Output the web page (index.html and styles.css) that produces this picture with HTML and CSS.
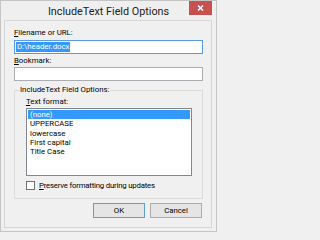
FILE: index.html
```html
<!DOCTYPE html>
<html>
<head>
<meta charset="utf-8">
<link rel="stylesheet" href="styles.css">
</head>
<body>
<div class="window">
  <div class="titlebar">
    <span class="title">IncludeText Field Options</span>
    <span class="close"><svg width="23" height="14" viewBox="0 0 23 14"><path d="M9 4.5 L14 9.5 M14 4.5 L9 9.5" stroke="#fff" stroke-width="1.6" fill="none"/></svg></span>
  </div>
  <div class="client">
    <div class="lbl"><u>F</u>ilename or URL:</div>
    <div class="input focused"><span class="seltext">D:\header.docx</span></div>
    <div class="lbl lbl2"><u>B</u>ookmark:</div>
    <div class="input"></div>
    <fieldset class="group">
      <legend class="legend">IncludeText Field Options:</legend>
      <div class="lbl lbl3"><u>T</u>ext format:</div>
      <div class="list">
        <div class="item selected">(none)</div>
        <div class="item">UPPERCASE</div>
        <div class="item">lowercase</div>
        <div class="item">First capital</div>
        <div class="item">Title Case</div>
      </div>
      <div class="check"><span class="box"></span><span class="checklbl"><u>P</u>reserve formatting during updates</span></div>
    </fieldset>
    <div class="buttons">
      <div class="btn default">OK</div>
      <div class="btn">Cancel</div>
    </div>
  </div>
</div>
</body>
</html>
```
FILE: styles.css
```css
* { box-sizing: border-box; }
html, body { margin: 0; padding: 0; background: #f0f0f0; }
body { font-family: Roboto, "Noto Sans", sans-serif; font-size: 7.8px; color: #000; }
.window {
  width: 217px; height: 232px;
  border: 1px solid #c4c4c4;
  background: #efefef;
  display: flex; flex-direction: column;
  position: relative;
}
.titlebar {
  height: 19px; flex: none;
  display: flex; align-items: center; justify-content: center;
}
.title { font-size: 10.8px; color: #222; margin-top: 1px; }
.close {
  position: absolute; top: 0; right: 4px;
  width: 23px; height: 14px; background: #c75050;
  display: flex;
}
.client {
  flex: 1;
  margin: 0 4px 3px 3px;
  border: 1px solid #d6d6d6;
  background: #f0f0f0;
  padding: 6px 8px 0 9px;
  display: flex; flex-direction: column;
}
.lbl { height: 12px; line-height: 12px; margin-bottom: 1px; white-space: nowrap; }
.lbl2 { margin-top: 1px; margin-bottom: 0; }
.input {
  height: 14px; width: 189px;
  background: #fff; border: 1px solid #abadb3;
  padding: 1px 1px;
  line-height: 10px;
}
.input.focused { border-color: #569de5; }
.seltext { background: #3399ff; color: #fff; display: inline-block; height: 10px; padding: 0 1px; }
.group {
  margin: 4px 0 0 0; padding: 1px 10px 8px 11px;
  width: 189px;
  border: 1px solid #dcdcdc;
  min-width: 0;
}
.legend { padding: 0 1px; margin-left: -7px; line-height: 10px; height: 10px; }
.lbl3 { margin-bottom: 0; }
.list {
  width: 166px; height: 68px;
  background: #fff; border: 1px solid #828790;
  padding: 1px;
}
.item { height: 9.25px; line-height: 9.25px; padding-left: 2px; white-space: nowrap; font-size: 7.8px; }
.item.selected { background: #3399ff; color: #fff; }
.check { display: flex; align-items: center; height: 10px; margin-top: 4px; white-space: nowrap; }
.checklbl { letter-spacing: -0.2px; }
.box { width: 9px; height: 9px; border: 1px solid #707070; background: #fff; margin-right: 4px; flex: none; }
.buttons { display: flex; justify-content: flex-end; gap: 5px; margin-top: 4px; margin-right: 1px; }
.btn {
  width: 52px; height: 15px;
  border: 1px solid #acacac; background: #e5e5e5;
  display: flex; align-items: center; justify-content: center;
}
.btn.default { border-color: #5a9fd8; }
```
